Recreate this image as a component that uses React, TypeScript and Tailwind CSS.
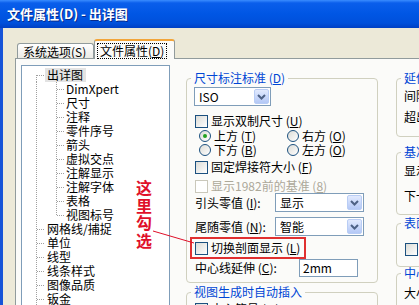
import React from "react"

const treeTop = ["网格线/捕捉", "单位", "线型", "线条样式", "图像品质", "钣金"]
const treeChildren = ["DimXpert", "尺寸", "注释", "零件序号", "箭头", "虚拟交点", "注解显示", "注解字体", "表格", "视图标号"]

function Dots({ x1, y1, x2, y2 }: { x1: number; y1: number; x2: number; y2: number }) {
  return (
    <line x1={x1} y1={y1} x2={x2} y2={y2} stroke="#A0A0A0" strokeWidth="1" strokeDasharray="1 1" shapeRendering="crispEdges" />
  )
}

function TreeRow({ label, child, first, lastChild, selected }: { label: string; child?: boolean; first?: boolean; lastChild?: boolean; selected?: boolean }) {
  return (
    <div className="flex h-[14px] items-center">
      {child ? (
        <svg width="42" height="14" className="shrink-0">
          <Dots x1={14.5} y1={0} x2={14.5} y2={14} />
          <Dots x1={34.5} y1={0} x2={34.5} y2={lastChild ? 8 : 14} />
          <Dots x1={35} y1={7.5} x2={42} y2={7.5} />
        </svg>
      ) : (
        <svg width="23" height="14" className="shrink-0">
          <Dots x1={14.5} y1={first ? 7 : 0} x2={14.5} y2={14} />
          <Dots x1={15} y1={7.5} x2={23} y2={7.5} />
        </svg>
      )}
      <span className={`pl-[2px] pr-[3px] leading-[14px] whitespace-nowrap ${selected ? "bg-[#E3E3E3]" : ""}`}>{label}</span>
    </div>
  )
}

function Chevron() {
  return (
    <svg width="9" height="6" viewBox="0 0 9 6">
      <path d="M1 1 L4.5 4.5 L8 1" stroke="#4D6185" strokeWidth="2" fill="none" />
    </svg>
  )
}

function Select({ value, w }: { value: string; w: string }) {
  return (
    <div className={`${w} h-[19px] border border-[#7F9DB9] bg-white flex items-center justify-between pl-[4px] pr-[1px] shrink-0`}>
      <span className="leading-[14px]">{value}</span>
      <div className="w-[15px] h-[15px] rounded-[2px] border border-[#B9CDF5] bg-linear-to-b from-[#E2EAFE] to-[#B4C8F6] flex items-center justify-center">
        <Chevron />
      </div>
    </div>
  )
}

function Check({ label, disabled }: { label: React.ReactNode; disabled?: boolean }) {
  return (
    <div className="flex items-center h-[14px] gap-[3px]">
      <div
        className={`ml-[1px] w-[13px] h-[13px] border shrink-0 ${
          disabled ? "border-[#CAC8BB] bg-white" : "border-[#1C5180] bg-linear-to-br from-[#DCDCD7] to-white"
        }`}
      />
      <span className={`leading-[14px] whitespace-nowrap ${disabled ? "text-[#ACA899]" : ""}`}>{label}</span>
    </div>
  )
}

function Radio({ label, on }: { label: React.ReactNode; on?: boolean }) {
  return (
    <div className="flex items-center h-[14px] gap-[3px]">
      <div className="w-[12px] h-[12px] rounded-full border border-[#1C5180] bg-linear-to-br from-[#DCDCD7] to-white flex items-center justify-center shrink-0">
        {on && <div className="w-[4px] h-[4px] rounded-full bg-[#21A121]" />}
      </div>
      <span className="leading-[14px] whitespace-nowrap">{label}</span>
    </div>
  )
}

function Group({ title, className, children }: { title: React.ReactNode; className?: string; children?: React.ReactNode }) {
  return (
    <fieldset className={`border border-[#D0D0BF] rounded-[4px] pl-[7px] pr-[6px] ${className ?? ""}`}>
      <legend className="-ml-[3px] px-[3px] leading-[12px] text-[#0046D5] whitespace-nowrap">{title}</legend>
      {children}
    </fieldset>
  )
}

// mnemonic key, letter underlined like Windows dialogs
const K = ({ c }: { c: string }) => (
  <span>
    (<u className="underline-offset-[1px]">{c}</u>)
  </span>
)

export default function App() {
  return (
    <div className="w-[419px] h-[305px] overflow-hidden bg-[#ECE9D8] flex flex-col relative text-[12px] text-black font-['Noto_Sans_CJK_SC','Liberation_Sans',sans-serif]">
      {/* title bar */}
      <div className="h-[28px] shrink-0 flex items-center pl-[7px] text-white font-bold text-[13px] [text-shadow:1px_1px_#0A2A8A] bg-[linear-gradient(180deg,#3A8CFF_0px,#0A5EEB_3px,#0056E4_14px,#0050DB_23px,#0040C4_28px)]">
        文件属性(D) - 出详图
      </div>

      <div className="flex flex-1 min-h-0">
        <div className="w-[3px] shrink-0 bg-[#1654D8]" />
        <div className="flex-1 min-w-0 pl-[12px] pt-[11px] flex flex-col overflow-hidden">
          {/* tabs */}
          <div className="flex items-end h-[19px] pl-[2px] shrink-0">
            <div className="w-[77px] h-[15px] border border-b-0 border-[#919B9C] rounded-t-[3px] bg-linear-to-b from-white to-[#ECEBE6] pl-[5px] flex items-center leading-[13px] whitespace-nowrap">
              系统选项(<u>S</u>)
            </div>
            <div className="relative z-10 w-[81px] h-[20px] -mb-[1px] border border-b-0 border-[#919B9C] border-t-[2px] border-t-[#F2A53A] rounded-t-[3px] bg-[#FBFBF9] pl-[2px] pt-[1px]">
              <span className="inline-block border border-dotted border-black px-[2px] leading-[14px] whitespace-nowrap">
                文件属性(<u>D</u>)
              </span>
            </div>
          </div>

          {/* panel */}
          <div className="w-[470px] flex-1 border border-[#919B9C] bg-[#FBFBF9] flex pl-[5px] pt-[6px]">
            {/* tree */}
            <div className="w-[149px] h-[300px] shrink-0 border border-[#7F9DB9] bg-white pt-[2px]">
              <TreeRow label="出详图" first selected />
              {treeChildren.map((t, i) => (
                <TreeRow key={t} label={t} child lastChild={i === treeChildren.length - 1} />
              ))}
              {treeTop.map((t) => (
                <TreeRow key={t} label={t} />
              ))}
            </div>

            {/* middle column */}
            <div className="ml-[16px] w-[192px] shrink-0 flex flex-col pt-[7px]">
              <Group title={<>尺寸标注标准 <K c="D" /></>} className="pb-[5px]">
                <div className="mt-[3px] flex flex-col">
                  <Select value="ISO" w="w-[77px]" />
                  <div className="mt-[8px]">
                    <Check label={<>显示双制尺寸 <K c="U" /></>} />
                  </div>
                  <div className="mt-[1px] pl-[5px] flex">
                    <div className="w-[88px]"><Radio label={<>上方 <K c="T" /></>} on /></div>
                    <Radio label={<>右方 <K c="O" /></>} />
                  </div>
                  <div className="pl-[5px] flex">
                    <div className="w-[88px]"><Radio label={<>下方 <K c="B" /></>} /></div>
                    <Radio label={<>左方 <K c="O" /></>} />
                  </div>
                  <div className="mt-[3px]">
                    <Check label={<>固定焊接符大小 <K c="F" /></>} />
                  </div>
                  <div className="mt-[5px]">
                    <Check label={<>显示1982前的基准 <K c="8" /></>} disabled />
                  </div>
                  <div className="flex items-center">
                    <span className="w-[81px] pl-[1px] leading-[14px] whitespace-nowrap">引头零值 <K c="I" />:</span>
                    <Select value="显示" w="w-[89px]" />
                  </div>
                  <div className="mt-[5px] flex items-center">
                    <span className="w-[81px] pl-[1px] leading-[14px] whitespace-nowrap">尾随零值 <K c="N" />:</span>
                    <Select value="智能" w="w-[89px]" />
                  </div>
                  <div className="mt-[1px] -ml-[4px] w-[116px] h-[22px] border-2 border-[#E03030] pl-[2px] flex items-center">
                    <Check label={<>切换剖面显示 <K c="L" /></>} />
                  </div>
                  <div className="flex items-center">
                    <span className="w-[105px] pl-[1px] leading-[14px] whitespace-nowrap">中心线延伸 <K c="C" />:</span>
                    <div className="w-[59px] h-[18px] border border-[#7F9DB9] bg-white pl-[3px] flex items-center leading-[14px]">2mm</div>
                  </div>
                </div>
              </Group>
              <Group title="视图生成时自动插入" className="mt-[3px] pb-[6px]">
                <div className="mt-[4px]">
                  <Check label={<>中心符号 <K c="M" /></>} />
                </div>
              </Group>
            </div>

            {/* right column */}
            <div className="ml-[18px] w-[160px] shrink-0 flex flex-col pt-[7px]">
              <Group title="延伸线" className="pb-[12px]">
                <div className="mt-[5px] leading-[14px] whitespace-nowrap">间隔 <K c="G" />:</div>
                <div className="mt-[7px] leading-[14px] whitespace-nowrap">超出尺寸线 <K c="X" />:</div>
              </Group>
              <Group title="基准特征" className="mt-[9px] pb-[11px]">
                <div className="mt-[6px] leading-[14px] whitespace-nowrap">显示类型:</div>
                <div className="mt-[11px] leading-[14px] whitespace-nowrap">下一个标号:</div>
              </Group>
              <Group title="表面粗糙度" className="mt-[2px] pb-[10px]">
                <div className="mt-[13px]">
                  <Check label="显示符号" />
                </div>
              </Group>
              <Group title="中心符号线" className="mt-[0px] pb-[8px]">
                <div className="mt-[7px] leading-[14px] whitespace-nowrap">大小:</div>
              </Group>
            </div>
          </div>
        </div>
      </div>

      {/* red annotation over the tree */}
      <div className="absolute left-[136px] top-[179px] flex flex-col text-[16px] leading-[17.5px] font-bold text-[#E0102A]">
        <span>这</span>
        <span>里</span>
        <span>勾</span>
        <span>选</span>
      </div>
      <svg className="absolute left-0 top-0 pointer-events-none" width="419" height="305">
        <line x1="153" y1="231" x2="194" y2="243" stroke="#E0102A" strokeWidth="1" />
      </svg>
    </div>
  )
}
